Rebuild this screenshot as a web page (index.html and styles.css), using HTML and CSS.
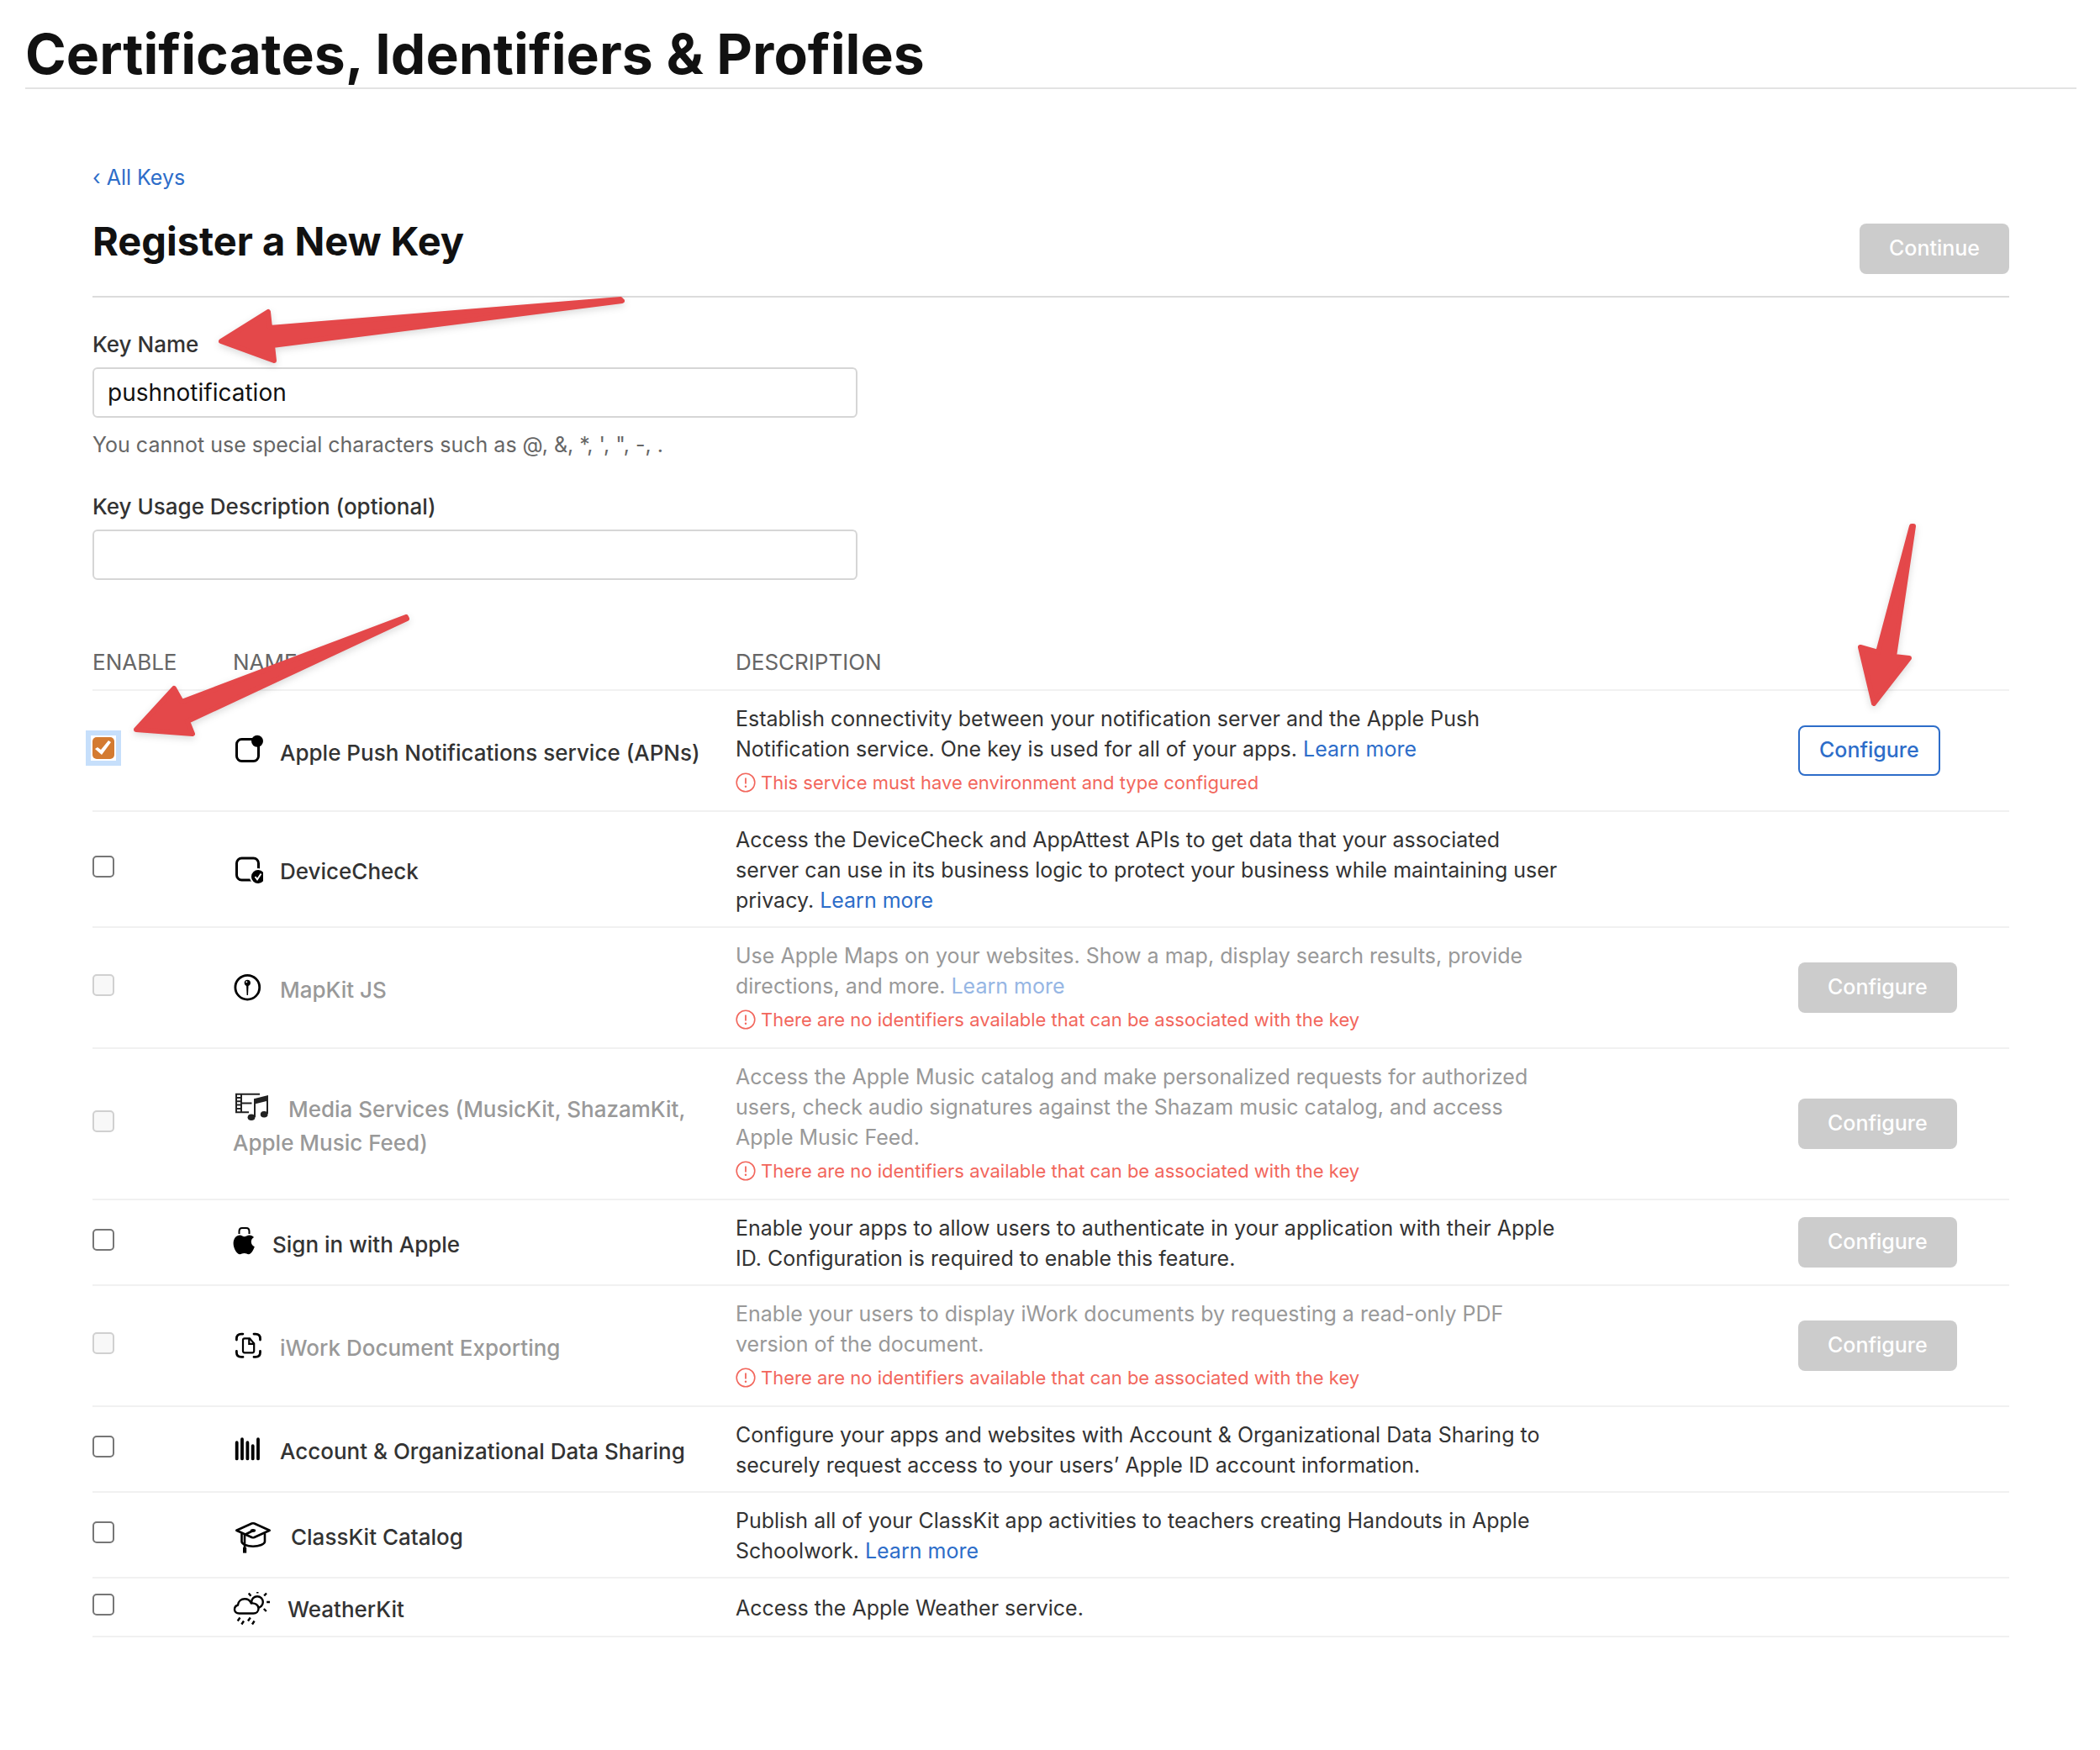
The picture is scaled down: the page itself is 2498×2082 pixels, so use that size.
FILE: index.html
```html
<!DOCTYPE html>
<html lang="en">
<head>
<meta charset="utf-8">
<meta name="viewport" content="width=device-width, initial-scale=1">
<title>Certificates, Identifiers &amp; Profiles</title>
<link rel="stylesheet" href="styles.css">
</head>
<body>
<svg class="defs" aria-hidden="true">
  <symbol id="alert" viewBox="0 0 24 24">
    <circle cx="12" cy="12" r="10.8" fill="none" stroke="currentColor" stroke-width="1.6"/>
    <path d="M12 6.600v7" stroke="currentColor" stroke-width="1.8"/>
    <circle cx="12" cy="16.700" r="1.200" fill="currentColor"/>
  </symbol>
</svg>

<header class="site-header">
  <h1 class="site-title">Certificates, Identifiers &amp; Profiles</h1>
</header>

<main class="page">
  <a class="back" href="#keys">‹ All Keys</a>

  <div class="toolbar">
    <h2 class="title">Register a New Key</h2>
    <button class="btn btn-disabled" type="button" disabled>Continue</button>
  </div>

  <form class="form">
    <div class="field">
      <label class="label" for="key-name">Key Name</label>
      <input class="input" id="key-name" type="text" value="pushnotification">
      <p class="hint">You cannot use special characters such as @, &amp;, *, ', ", -, .</p>
      <svg class="arrow arrow-name" viewBox="0 0 500 90" aria-hidden="true">
        <path d="M13 56 69 21 71 40 488 6 490 8 74 61 76 79Z"/>
      </svg>
    </div>
    <div class="field">
      <label class="label" for="key-usage">Key Usage Description (optional)</label>
      <input class="input" id="key-usage" type="text">
    </div>

    <div class="services">
      <table class="table">
        <colgroup>
          <col class="col-enable">
          <col class="col-name">
          <col>
          <col class="col-action">
        </colgroup>
        <thead>
          <tr><th scope="col">ENABLE</th><th scope="col">NAME</th><th scope="col">DESCRIPTION</th><td></td></tr>
        </thead>
        <tbody>
          <tr>
            <td class="enable"><span class="focus-ring"><input class="check" type="checkbox" id="s1" checked></span></td>
            <td class="name"><label for="s1"><svg class="icon" width="36" height="32" viewBox="0 0 36 32"><rect x="4.5" y="2.5" width="26" height="26" rx="6" fill="none" stroke="#000" stroke-width="3"/><circle cx="29" cy="4.800" r="7"/></svg>Apple Push Notifications service (APNs)</label></td>
            <td class="desc"><p class="text">Establish connectivity between your notification server and the Apple Push Notification service. One key is used for all of your apps. <a href="#apns">Learn more</a></p>
              <p class="warning"><svg class="alert"><use href="#alert"/></svg>This service must have environment and type configured</p></td>
            <td class="action"><button class="btn btn-outline" type="button">Configure</button></td>
          </tr>
          <tr>
            <td class="enable"><input class="check" type="checkbox" id="s2"></td>
            <td class="name"><label for="s2"><svg class="icon" width="36" height="32" viewBox="0 0 36 32"><rect x="4.5" y="3" width="26" height="26" rx="6" fill="none" stroke="#000" stroke-width="3"/><circle cx="30" cy="25" r="10" fill="#fff"/><path d="M36 19.800a8 8 0 1 0 0 10.400z"/><path d="m26.500 25 2.500 3.200 4.500-6.700" fill="none" stroke="#fff" stroke-width="2"/></svg>DeviceCheck</label></td>
            <td class="desc"><p class="text">Access the DeviceCheck and AppAttest APIs to get data that your associated server can use in its business logic to protect your business while maintaining user privacy. <a href="#devicecheck">Learn more</a></p></td>
            <td class="action"></td>
          </tr>
          <tr class="off">
            <td class="enable"><input class="check" type="checkbox" id="s3" disabled></td>
            <td class="name"><label for="s3"><svg class="icon" width="36" height="32" viewBox="0 0 36 32"><circle cx="17.300" cy="15.700" r="14.400" fill="none" stroke="#000" stroke-width="2.800"/><path d="M16 12h2.600l-.6 13h-1.400z"/><circle cx="17.300" cy="10.300" r="3.600"/><circle cx="16.300" cy="9.300" r="1" fill="#fff"/></svg>MapKit JS</label></td>
            <td class="desc"><p class="text">Use Apple Maps on your websites. Show a map, display search results, provide directions, and more. <a href="#mapkit">Learn more</a></p>
              <p class="warning"><svg class="alert"><use href="#alert"/></svg>There are no identifiers available that can be associated with the key</p></td>
            <td class="action"><button class="btn btn-disabled" type="button" disabled>Configure</button></td>
          </tr>
          <tr class="off">
            <td class="enable"><input class="check" type="checkbox" id="s4" disabled></td>
            <td class="name"><label for="s4"><svg class="icon" width="46" height="32" viewBox="0 0 46 32"><g fill="none" stroke="#222" stroke-width="2"><path d="M32 .8H4v21.400h15M10 1v21M10 11.500h12.500M4 5h6M4 9.300h6M4 13.600h6M4 17.900h6"/><path d="M26 7v21M41 4v20"/></g><path fill="#222" d="M25 6.300 42 2v6.500l-17 4.300z"/><ellipse cx="22" cy="28.200" rx="4.400" ry="3.800" fill="#222"/><ellipse cx="37.200" cy="24.800" rx="4.400" ry="3.800" fill="#222"/></svg>Media Services (MusicKit, ShazamKit, Apple Music Feed)</label></td>
            <td class="desc"><p class="text">Access the Apple Music catalog and make personalized requests for authorized users, check audio signatures against the Shazam music catalog, and access Apple Music Feed.</p>
              <p class="warning"><svg class="alert"><use href="#alert"/></svg>There are no identifiers available that can be associated with the key</p></td>
            <td class="action"><button class="btn btn-disabled" type="button" disabled>Configure</button></td>
          </tr>
          <tr>
            <td class="enable"><input class="check" type="checkbox" id="s5"></td>
            <td class="name"><label for="s5"><svg class="icon" width="27" height="32" viewBox="0 0 27 32"><path d="M7.500 6V3c0-2.500 1.500-4 3.500-4h5c2 0 3.500 1.500 3.500 4v3" fill="none" stroke="#000" stroke-width="2"/><path d="M13.500 9.300c1.700 0 3.600-1.900 6.300-1.900 2 0 4 1 5.200 2.700-4.700 2.700-4 9.200.8 11.100-1 3-4 9-7 9-2 0-2.800-1.200-5.200-1.200-2.500 0-3.400 1.200-5.300 1.200C4.800 30.200.6 23 .6 17.200c0-6 3.800-9.700 7.600-9.700 2.500 0 4.100 1.800 5.300 1.800z"/></svg>Sign in with Apple</label></td>
            <td class="desc"><p class="text">Enable your apps to allow users to authenticate in your application with their Apple ID. Configuration is required to enable this feature.</p></td>
            <td class="action"><button class="btn btn-disabled" type="button" disabled>Configure</button></td>
          </tr>
          <tr class="off">
            <td class="enable"><input class="check" type="checkbox" id="s6" disabled></td>
            <td class="name"><label for="s6"><svg class="icon" width="36" height="32" viewBox="0 0 36 32"><g fill="none" stroke="#000"><path stroke-width="2.800" stroke-linecap="round" d="M4.400 9V7.500c0-3.500 2-5.400 5.500-5.400h2M25 2.100h2c3.500 0 5.500 1.900 5.500 5.400V9M32.500 22.500V24c0 3.500-2 5.400-5.500 5.400h-2M12 29.400h-2c-3.500 0-5.600-1.900-5.600-5.400v-1.500"/><path stroke-width="2.200" d="M14 7.300h6l5.200 6v9a2 2 0 0 1-2 2H14a2 2 0 0 1-2-2v-13a2 2 0 0 1 2-2zM19.300 7.300v6.500h6"/></g></svg>iWork Document Exporting</label></td>
            <td class="desc"><p class="text">Enable your users to display iWork documents by requesting a read-only PDF version of the document.</p>
              <p class="warning"><svg class="alert"><use href="#alert"/></svg>There are no identifiers available that can be associated with the key</p></td>
            <td class="action"><button class="btn btn-disabled" type="button" disabled>Configure</button></td>
          </tr>
          <tr>
            <td class="enable"><input class="check" type="checkbox" id="s7"></td>
            <td class="name"><label for="s7"><svg class="icon" width="36" height="32" viewBox="0 0 36 32"><path d="M4.700 8.200v19.200M11 4.200v23.200M17.400 8.200v19.200M23.700 12.200v15.200M30 4.200v23.200" stroke="#000" stroke-width="3.800" stroke-linecap="round"/></svg>Account &amp; Organizational Data Sharing</label></td>
            <td class="desc"><p class="text">Configure your apps and websites with Account &amp; Organizational Data Sharing to securely request access to your users’ Apple ID account information.</p></td>
            <td class="action"></td>
          </tr>
          <tr>
            <td class="enable"><input class="check" type="checkbox" id="s8"></td>
            <td class="name"><label for="s8"><svg class="icon" width="49" height="32" viewBox="0 0 49 32"><g fill="none" stroke="#000" stroke-width="2.600" stroke-linejoin="round" stroke-linecap="round"><path d="M4.300 10.800 22.500 2.500q1.500-.6 3 0l18.200 8.300-18.200 8.200q-1.500.6-3 0z"/><path d="M10.500 15v9c0 3 6 5.700 13.500 5.700S38 27 38 24v-9M24 11l-10 5v16"/></g><ellipse cx="24" cy="10.900" rx="3.200" ry="1.800"/><path d="M12 31h4.200v6.600H12z"/></svg>ClassKit Catalog</label></td>
            <td class="desc"><p class="text">Publish all of your ClassKit app activities to teachers creating Handouts in Apple Schoolwork. <a href="#classkit">Learn more</a></p></td>
            <td class="action"></td>
          </tr>
          <tr>
            <td class="enable"><input class="check" type="checkbox" id="s9"></td>
            <td class="name"><label for="s9"><svg class="icon" width="45" height="32" viewBox="0 0 45 32"><g fill="none" stroke="#000" stroke-width="2.400" stroke-linejoin="round"><circle cx="29" cy="10" r="6.800"/><path fill="#fff" d="M7.500 23.500C4 23.500 2 21.300 2 18.700c0-2.600 1.800-4.500 4-5.200C6.500 9 10 6.300 14 6.300c3.800 0 6.500 2 7.800 5.200 4.700-.6 8.700 2 8.700 6.300 0 3.300-2.500 5.700-6 5.700z"/><path d="m18.800-.6 2.600 3.400M29.300-2v1.600M40 -.5l-2.800 3M40.200 10H44M36.800 18l3 3M8.500 28.500l-2.800 4M13 32.500l-2.600 4M20.800 28.500l-2.800 4M25.600 32.500l-2.600 4"/></g></svg>WeatherKit</label></td>
            <td class="desc"><p class="text">Access the Apple Weather service.</p></td>
            <td class="action"></td>
          </tr>
        </tbody>
      </table>
      <svg class="arrow arrow-enable" viewBox="0 0 350 160" aria-hidden="true">
        <path d="M14 120 59 71 68 87 335 -14 336 -12 75 110 81 125Z"/>
      </svg>
      <svg class="arrow arrow-configure" viewBox="0 0 90 240" aria-hidden="true">
        <path d="M13 158 34 164 74 14 76 14 53 169 71 171 29 225Z"/>
      </svg>
    </div>
  </form>
</main>
</body>
</html>
```
FILE: styles.css
```css
* { box-sizing: border-box; }

body {
  margin: 0;
  background: #fff;
  color: #333;
  font-family: Inter, "Liberation Sans", sans-serif;
  font-size: 26px;
  line-height: 36px;
}

h1, h2, p { margin: 0; }

a { color: #2d6dc9; text-decoration: none; }

.defs { position: absolute; width: 0; height: 0; }

.site-header {
  margin: 0 28px 0 30px;
  padding: 30px 0 6px;
  border-bottom: 2px solid #e3e3e3;
}

.site-title {
  color: #111;
  font-size: 66px;
  font-weight: 700;
  line-height: 68px;
}

.page { padding: 87px 108px 132px 110px; }

.back { display: block; width: max-content; font-size: 25px; }

.toolbar {
  display: flex;
  align-items: flex-end;
  justify-content: space-between;
  padding: 28px 0 26px;
  border-bottom: 2px solid #dcdcdc;
}

.title {
  padding-bottom: 9px;
  color: #111;
  font-size: 47px;
  font-weight: 700;
  line-height: 60px;
}

.btn {
  height: 60px;
  padding: 0 33px 2px;
  border: 2px solid transparent;
  border-radius: 8px;
  font: inherit;
  font-size: 25px;
  font-weight: 500;
}

.btn-disabled { background: #ccc; color: #fff; }

.btn-outline {
  padding: 0 23px 2px;
  border-color: #2d6dc9;
  background: #fff;
  color: #2d6dc9;
}

.field { position: relative; padding-top: 38px; }

.label {
  display: block;
  margin-bottom: 9px;
  font-weight: 500;
}

.input {
  display: block;
  width: 910px;
  max-width: 100%;
  height: 60px;
  padding: 0 16px;
  border: 2px solid #d6d6d6;
  border-radius: 6px;
  background: #fff;
  color: #111;
  font: inherit;
  font-size: 28px;
}

.hint { margin-top: 14px; color: #666; font-size: 25px; }

.services { position: relative; margin-top: 66px; }

.table {
  width: 100%;
  border-spacing: 0;
  table-layout: fixed;
}

.col-enable { width: 167px; }
.col-name { width: 598px; }
.col-action { width: 251px; }

th, td {
  padding: 14px 0;
  border-bottom: 2px solid #f1f1f1;
  text-align: left;
  vertical-align: middle;
}

th { color: #666; font-weight: 400; }

.enable { padding: 11px 0 17px; }
.name { padding: 17px 40px 11px 0; font-weight: 500; line-height: 40px; }
.desc { padding: 15px 0 13px; }
.action { padding: 0; }

.check {
  appearance: none;
  display: block;
  width: 26px;
  height: 26px;
  margin: 0;
  border: 2px solid #767676;
  border-radius: 5px;
  background: #fff;
}

.check:disabled { border-color: #d0d0d0; background: #f8f8f8; }

.check:checked {
  border: 0;
  background: #d47b31;
}

.check:checked::before {
  content: "";
  display: block;
  width: 26px;
  height: 26px;
  background: #fff;
  clip-path: polygon(3px 14px, 6px 12px, 10px 15px, 19px 4px, 22px 6px, 11px 21px);
}

.focus-ring {
  display: block;
  width: 42px;
  height: 42px;
  margin: -8px;
  padding: 2px;
  border: 6px solid #c6dffb;
}

.icon {
  margin-right: 20px;
  overflow: visible;
  vertical-align: -4px;
}

.text { max-width: 980px; font-size: 25px; }

.warning {
  display: flex;
  align-items: center;
  gap: 6px;
  padding-top: 2px;
  color: #f2665c;
  font-size: 22px;
  line-height: 40px;
}

.alert { width: 24px; height: 24px; }

.off .name, .off .text { color: #999; }
.off .text a { color: #96b6e4; }

.arrow {
  position: absolute;
  overflow: visible;
  fill: #e4484a;
  stroke: #e4484a;
  stroke-width: 6px;
  stroke-linejoin: round;
  filter: drop-shadow(0 3px 4px rgba(0, 0, 0, .15));
  pointer-events: none;
}

.arrow-name { left: 140px; top: -4px; width: 500px; height: 90px; }
.arrow-enable { left: 38px; top: -8px; width: 350px; height: 160px; }
.arrow-configure { right: 100px; top: -144px; width: 90px; height: 240px; }
```
